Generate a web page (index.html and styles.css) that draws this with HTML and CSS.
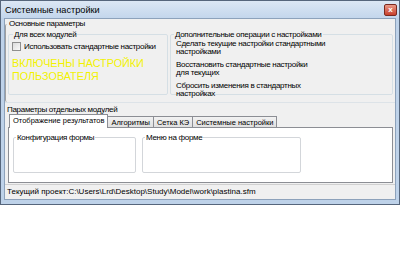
FILE: index.html
```html
<!DOCTYPE html>
<html lang="ru">
<head>
    <meta charset="UTF-8">
    <title>Системные настройки</title>
    <link rel="stylesheet" href="styles.css">
</head>
<body>
    <div class="window">
        <div class="titlebar">
            <span class="title">Системные настройки</span>
            <span class="close">x</span>
        </div>
        <div class="client">
            <fieldset class="group main">
                <legend>Основные параметры</legend>
                <div class="cols">
                    <fieldset class="group all">
                        <legend>Для всех модулей</legend>
                        <label class="check"><span class="box"></span>Использовать стандартные настройки</label>
                        <div class="state">ВКЛЮЧЕНЫ НАСТРОЙКИ<br>ПОЛЬЗОВАТЕЛЯ</div>
                    </fieldset>
                    <fieldset class="group extra">
                        <legend>Дополнительные операции с настройками</legend>
                        <div class="op">Сделать текущие настройки стандартными<br>настройками</div>
                        <div class="op">Восстановить стандартные настройки<br>для текущих</div>
                        <div class="op">Сбросить изменения в стандартных<br>настройках</div>
                    </fieldset>
                </div>
            </fieldset>
            <div class="modules">
                <div class="mod-title">Параметры отдельных модулей</div>
                <div class="tabs">
                    <span class="tab active">Отображение результатов</span>
                    <span class="tab">Алгоритмы</span>
                    <span class="tab">Сетка КЭ</span>
                    <span class="tab">Системные настройки</span>
                </div>
                <div class="panel">
                    <div class="inner form-conf"><span class="inner-title">Конфигурация формы</span></div>
                    <div class="inner form-menu"><span class="inner-title">Меню на форме</span></div>
                </div>
            </div>
            <div class="status">Текущий проект:C:\Users\Lrd\Desktop\Study\Model\work\plastina.sfm</div>
        </div>
    </div>
</body>
</html>
```

FILE: styles.css
```css
body {
    margin: 0;
    background: #fff;
    font-family: "Liberation Sans", Arial, sans-serif;
    font-size: 8px;
    letter-spacing: -0.3px;
    color: #000;
}
.window {
    width: 400px;
    height: 205px;
    box-sizing: border-box;
    border: 1px solid #56667c;
    background: #bed2e9;
    padding: 0 3px 4px 3px;
    display: flex;
    flex-direction: column;
}
.titlebar {
    height: 17px;
    flex: none;
    display: flex;
    align-items: center;
    justify-content: space-between;
    background: linear-gradient(#dce7f4, #c3d6ec);
    margin: 0 -3px;
    padding: 0 2px 0 4px;
}
.title {
    font-size: 9.2px;
    letter-spacing: 0;
    color: #000;
}
.close {
    width: 13px;
    height: 12px;
    box-sizing: border-box;
    border: 1px solid #7b2a20;
    border-radius: 2px;
    background: linear-gradient(#eb9a88, #c8402c);
    color: #fff;
    font-size: 8px;
    font-weight: bold;
    line-height: 9px;
    text-align: center;
    letter-spacing: 0;
}
.client {
    flex: 1;
    background: #f0f0f0;
    border: 1px solid #8da2bb;
    display: flex;
    flex-direction: column;
}
.group {
    border: 1px solid #d5dfe5;
    border-radius: 2px;
    margin: 0;
    padding: 0;
    min-width: 0;
}
.group legend {
    padding: 0 1px;
    margin-left: 1px;
    line-height: 9px;
}
.main {
    height: 83px;
    flex: none;
    box-sizing: border-box;
    border-left-color: #a0a0a0;
    border-top: none;
    border-right: none;
    border-bottom: none;
    padding: 0 0 0 2px;
}
.main > legend {
    margin-left: 0;
}
.cols {
    display: flex;
    gap: 2px;
    margin-top: 2px;
}
.all {
    width: 160px;
    height: 65px;
    flex: none;
    box-sizing: border-box;
    padding: 0 3px;
}
.check {
    display: flex;
    align-items: center;
    gap: 3px;
    margin-top: 3px;
    white-space: nowrap;
}
.box {
    width: 9px;
    height: 9px;
    flex: none;
    box-sizing: border-box;
    border: 1px solid #8f8f8f;
    background: linear-gradient(135deg, #dcdcdc, #fafafa);
}
.state {
    margin-top: 6px;
    color: #f2f200;
    font-size: 10.8px;
    letter-spacing: 0;
    line-height: 13px;
}
.extra {
    flex: 1;
    height: 65px;
    box-sizing: border-box;
    padding: 0 2px;
    margin-right: 2px;
}
.op {
    margin: 1px 0 0 3px;
    line-height: 8px;
}
.op + .op {
    margin-top: 5px;
}
.modules {
    display: flex;
    flex-direction: column;
    flex: 1;
    padding: 2px 2px 0 2px;
    border-top: 1px solid #dde3e8;
}
.mod-title {
    line-height: 9px;
}
.tabs {
    display: flex;
    margin: 0 0 0 3px;
    position: relative;
    z-index: 1;
}
.tab {
    border: 1px solid #8c8e94;
    border-bottom: none;
    background: linear-gradient(#f2f2f2, #e0e0e0);
    padding: 1px 3px 0;
    font-size: 7.5px;
    letter-spacing: 0;
    line-height: 9px;
    margin-top: 2px;
    margin-left: -1px;
}
.tab.active {
    background: #fff;
    margin-top: 0;
    padding: 1px 3px 2px;
    margin-bottom: -1px;
}
.panel {
    flex: 1;
    background: #fff;
    border: 1px solid #8c8e94;
    display: flex;
    align-items: flex-start;
    gap: 6px;
    padding: 9px 4px 0 4px;
    margin-left: 1px;
}
.inner {
    flex: none;
    height: 36px;
    box-sizing: border-box;
    border: 1px solid #d3d6da;
    border-radius: 2px;
}
.inner-title {
    display: inline-block;
    margin: -5px 0 0 2px;
    padding: 0 1px;
    background: #fff;
    line-height: 9px;
    vertical-align: top;
}
.form-conf {
    width: 123px;
}
.form-menu {
    width: 159px;
}
.status {
    height: 14px;
    flex: none;
    border-top: 1px solid #d0d0d0;
    margin-top: 1px;
    padding-left: 2px;
    line-height: 14px;
    letter-spacing: 0;
}
```
